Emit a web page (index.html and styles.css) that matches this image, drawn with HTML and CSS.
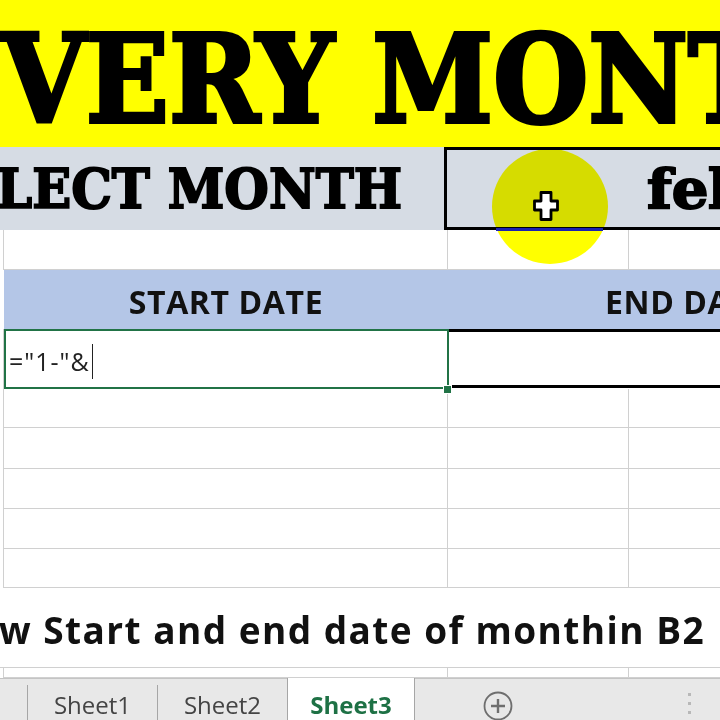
FILE: index.html
```html
<!DOCTYPE html>
<html>
<head>
<meta charset="utf-8">
<link rel="stylesheet" href="styles.css">
</head>
<body>
<div class="sheet">
  <div class="banner"><span class="banner-text">VERY MONTH</span></div>
  <div class="band">
    <div class="band-label"><span class="band-text">SELECT MONTH</span></div>
    <div class="band-box"><span class="band-text">feb</span></div>
  </div>
  <div class="row h40">
    <div class="lead"></div><div class="cell ca"></div><div class="cell cb"></div><div class="cell cc"></div>
  </div>
  <div class="row header">
    <div class="lead"></div>
    <div class="hcell ha">START DATE</div>
    <div class="hcell hb">END DATE</div>
  </div>
  <div class="row selrow">
    <div class="lead"></div>
    <div class="selcell"><span class="formula">="1-"&amp;</span><span class="caret"></span></div>
    <div class="bordered"></div>
  </div>
  <div class="row h39"><div class="lead"></div><div class="cell ca"></div><div class="cell cb"></div><div class="cell cc"></div></div>
  <div class="row h41"><div class="lead"></div><div class="cell ca"></div><div class="cell cb"></div><div class="cell cc"></div></div>
  <div class="row h40"><div class="lead"></div><div class="cell ca"></div><div class="cell cb"></div><div class="cell cc"></div></div>
  <div class="row h40"><div class="lead"></div><div class="cell ca"></div><div class="cell cb"></div><div class="cell cc"></div></div>
  <div class="row h39"><div class="lead"></div><div class="cell ca"></div><div class="cell cb"></div><div class="cell cc"></div></div>
  <div class="caption"><span class="caption-text">w Start and end date of monthin B2</span></div>
  <div class="row h10"><div class="lead"></div><div class="cell ca"></div><div class="cell cb"></div><div class="cell cc"></div></div>
  <div class="tabbar">
    <div class="tab-lead"></div>
    <div class="tab">Sheet1</div>
    <div class="tab">Sheet2</div>
    <div class="tab active">Sheet3</div>
    <div class="tab-rest">
      <span class="addbtn">
        <svg width="30" height="30" viewBox="0 0 30 30"><circle cx="15" cy="15" r="13.5" fill="none" stroke="#6e6e6e" stroke-width="1.8"/><path d="M15 8v14M8 15h14" stroke="#6e6e6e" stroke-width="2.4" fill="none"/></svg>
      </span>
      <span class="dots"><i></i><i></i><i></i></span>
    </div>
  </div>

  <div class="highlight"></div>
  <div class="blueline"></div>
  <svg class="pointer" width="26" height="30" viewBox="0 0 26 30"><path d="M8 1.5h10v8.5h6.5v9H18v9.5H8V19H1.5v-9H8z" fill="#fff" stroke="#000" stroke-width="2.8" stroke-linejoin="round"/></svg>
  <div class="fillhandle"></div>
</div>
</body>
</html>
```
FILE: styles.css
```css
html, body {
  margin: 0;
  padding: 0;
  background: #fff;
}
.sheet {
  position: relative;
  width: 720px;
  height: 720px;
  overflow: hidden;
  display: flex;
  flex-direction: column;
}
.banner {
  height: 147px;
  flex: 0 0 147px;
  background: #ffff00;
  overflow: hidden;
  white-space: nowrap;
}
.banner-text {
  display: inline-block;
  font-family: "DejaVu Serif", serif;
  font-weight: bold;
  font-size: 122px;
  line-height: 147px;
  color: #000;
  -webkit-text-stroke: 4px #000;
  transform: scaleX(0.895);
  transform-origin: left center;
  margin-left: 1px;
  margin-top: 6px;
}
.band {
  flex: 0 0 83px;
  display: flex;
  background: #d6dce4;
}
.band-label {
  width: 444px;
  flex: 0 0 444px;
  display: flex;
  justify-content: flex-end;
  align-items: center;
  overflow: hidden;
  padding-right: 42px;
  box-sizing: border-box;
}
.band-text {
  font-family: "DejaVu Serif", serif;
  font-weight: bold;
  font-size: 55px;
  white-space: nowrap;
  flex-shrink: 0;
  color: #000;
  -webkit-text-stroke: 2px #000;
  transform: scaleX(0.93);
  transform-origin: right center;
}
.band-box {
  flex: 1;
  border: 3px solid #000;
  border-right: none;
  box-sizing: border-box;
  display: flex;
  align-items: center;
  padding-left: 200px;
  overflow: hidden;
}
.band-box .band-text {
  transform-origin: left center;
  transform: scaleX(1.05);
}
.row {
  display: flex;
  flex-shrink: 0;
}
.h40 { height: 40px; }
.h39 { height: 39px; }
.h41 { height: 41px; }
.h10 { height: 10px; }
.lead {
  width: 4px;
  flex: 0 0 4px;
  border-right: 1px solid #d0d0d0;
  box-sizing: border-box;
}
.cell {
  box-sizing: border-box;
  border-right: 1px solid #d0d0d0;
  border-bottom: 1px solid #d0d0d0;
}
.ca { width: 444px; flex: 0 0 444px; }
.cb { width: 181px; flex: 0 0 181px; }
.cc { flex: 1; border-right: none; }
.header {
  height: 59px;
  background: #b4c6e7;
}
.header .lead { border-right: none; background: #fff; }
.hcell {
  font-family: "Open Sans", sans-serif;
  font-weight: 700;
  font-size: 32px;
  letter-spacing: 0.6px;
  color: #111;
  line-height: 59px;
  padding-top: 2px;
  white-space: nowrap;
  overflow: hidden;
}
.ha {
  width: 444px;
  flex: 0 0 444px;
  text-align: center;
}
.hb {
  flex: 1;
  padding-left: 157px;
}
.selrow {
  height: 60px;
}
.selcell {
  width: 445px;
  flex: 0 0 445px;
  border: 2px solid #217346;
  box-sizing: border-box;
  display: flex;
  align-items: center;
  padding-left: 3px;
  padding-top: 4px;
}
.formula {
  font-family: "Open Sans", sans-serif;
  font-size: 25px;
  color: #222;
  letter-spacing: 1px;
}
.caret {
  display: inline-block;
  width: 1.5px;
  height: 35px;
  background: #222;
  margin-left: 2px;
}
.bordered {
  flex: 1;
  border-top: 3px solid #000;
  border-bottom: 3px solid #000;
  box-sizing: border-box;
  margin-bottom: 1px;
}
.caption {
  flex: 0 0 80px;
  background: #fff;
  display: flex;
  align-items: center;
  overflow: hidden;
  white-space: nowrap;
  border-bottom: 1px solid #d0d0d0;
  box-sizing: border-box;
}
.caption-text {
  font-family: "Open Sans", sans-serif;
  font-weight: 700;
  font-size: 37px;
  letter-spacing: 1.45px;
  color: #111;
  margin-left: -1px;
  padding-top: 4px;
}
.tabbar {
  flex: 1;
  display: flex;
  background: #e8e8e8;
  border-top: 1px solid #c4c4c4;
  box-sizing: border-box;
  font-family: "Open Sans", sans-serif;
  font-size: 24px;
  color: #444;
}
.tab-lead {
  width: 27px;
  flex: 0 0 27px;
}
.tab {
  width: 130px;
  flex: 0 0 130px;
  border-left: 1px solid #a6a6a6;
  box-sizing: border-box;
  text-align: center;
  line-height: 30px;
  padding-top: 5px;
  margin-top: 6px;
}
.tab.active {
  width: 128px;
  flex: 0 0 128px;
  background: #fff;
  color: #1e7145;
  font-weight: 700;
  margin-top: -1px;
  padding-top: 12px;
  border-left: 1px solid #a6a6a6;
  border-right: 1px solid #a6a6a6;
}
.tab-rest {
  flex: 1;
  position: relative;
}
.addbtn {
  position: absolute;
  left: 68px;
  top: 12px;
  line-height: 0;
}
.dots {
  position: absolute;
  left: 273px;
  top: 14px;
  display: flex;
  flex-direction: column;
  gap: 6px;
}
.dots i {
  display: block;
  width: 3px;
  height: 3px;
  background: #b8b8b8;
}
.highlight {
  position: absolute;
  left: 492px;
  top: 149px;
  width: 116px;
  height: 115px;
  border-radius: 50%;
  background: #ffff00;
  mix-blend-mode: multiply;
}
.blueline {
  position: absolute;
  left: 496px;
  top: 228px;
  width: 107px;
  height: 3px;
  background: #1c22b0;
}
.pointer {
  position: absolute;
  left: 533px;
  top: 191px;
}
.fillhandle {
  position: absolute;
  left: 443px;
  top: 385px;
  width: 7px;
  height: 7px;
  background: #217346;
  border: 1px solid #fff;
}
```
